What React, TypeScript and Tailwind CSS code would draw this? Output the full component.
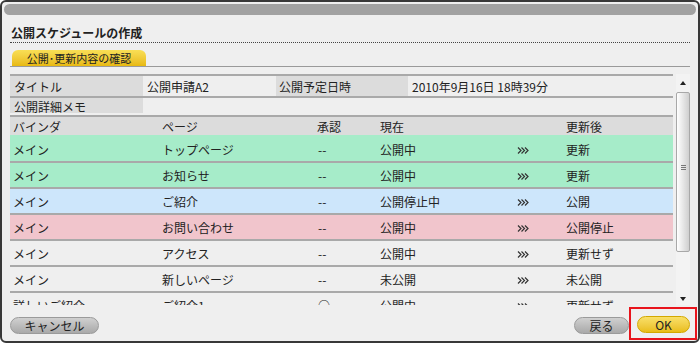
import React from 'react'

type Row = {
  binder: string
  page: string
  approve: string
  now: string
  after: string
  tone: string
}

const rows: Row[] = [
  { binder: 'メイン', page: 'トップページ', approve: '--', now: '公開中', after: '更新', tone: 'bg-[#a6ecc9] border-t-transparent' },
  { binder: 'メイン', page: 'お知らせ', approve: '--', now: '公開中', after: '更新', tone: 'bg-[#a6ecc9] border-t-[#a9a9a9]' },
  { binder: 'メイン', page: 'ご紹介', approve: '--', now: '公開停止中', after: '公開', tone: 'bg-[#cde6fb] border-t-[#a9a9a9]' },
  { binder: 'メイン', page: 'お問い合わせ', approve: '--', now: '公開中', after: '公開停止', tone: 'bg-[#f1c5cc] border-t-[#a9a9a9]' },
  { binder: 'メイン', page: 'アクセス', approve: '--', now: '公開中', after: '更新せず', tone: 'bg-[#efefef] border-t-[#a9a9a9]' },
  { binder: 'メイン', page: '新しいページ', approve: '--', now: '未公開', after: '未公開', tone: 'bg-[#efefef] border-t-[#a9a9a9]' },
  { binder: '詳しいご紹介', page: 'ご紹介1', approve: '○', now: '公開中', after: '更新せず', tone: 'bg-[#efefef] border-t-[#a9a9a9]' },
]

// three small chevrons between 現在 and 更新後
function Chevrons() {
  return (
    <svg width="13" height="9" viewBox="0 0 13 9" className="block">
      <g fill="none" stroke="#333" strokeWidth="1.2">
        <polyline points="1,1.5 4,4.5 1,7.5" />
        <polyline points="4.5,1.5 7.5,4.5 4.5,7.5" />
        <polyline points="8,1.5 11,4.5 8,7.5" />
      </g>
    </svg>
  )
}

function ScrollBar() {
  return (
    <div className="w-[14px] h-full flex flex-col items-center bg-[#f3f3f3]">
      <div className="mt-[7px] w-0 h-0 border-l-[3px] border-r-[3px] border-b-[4px] border-l-transparent border-r-transparent border-b-[#222]" />
      <div className="mt-[7px] w-[14px] h-[160px] rounded-[2px] border border-[#a8a8a8] bg-gradient-to-r from-white to-[#cfcfcf] flex items-center justify-center">
        <div className="flex flex-col gap-[1px] -mt-[10px]">
          <div className="w-[5px] h-[1px] bg-[#777]" />
          <div className="w-[5px] h-[1px] bg-[#777]" />
          <div className="w-[5px] h-[1px] bg-[#777]" />
        </div>
      </div>
      <div className="flex-1" />
      <div className="mb-[4px] w-0 h-0 border-l-[3px] border-r-[3px] border-t-[4px] border-l-transparent border-r-transparent border-t-[#222]" />
    </div>
  )
}

export default function App() {
  return (
    <div className="w-[700px] h-[343px] bg-white font-['Noto_Sans_CJK_JP','Noto_Sans',sans-serif] text-[#222] text-[12px]">
      <div className="w-full h-full rounded-[6px] border-2 border-[#383838] bg-[#efefef] flex flex-col overflow-hidden">
        {/* top bar */}
        <div className="mt-[2px] mx-[2px] h-[11px] rounded-full bg-[#a2a2a2]" />

        <div className="px-[8px] flex flex-col">
          {/* title */}
          <div className="mt-[10px] h-[16px] leading-[16px] pl-[1px] font-bold text-[12px] border-b border-dotted border-[#444] box-content pb-[1px]">
            公開スケジュールの作成
          </div>

          {/* tab */}
          <div className="mt-[7px] flex border-b border-[#9a9a9a]">
            <div className="ml-[2px] w-[134px] h-[16px] rounded-t-[6px] bg-gradient-to-b from-[#f9df55] to-[#e8b90c] text-[11px] leading-[16px] text-center text-[#222]">
              公開･更新内容の確認
            </div>
          </div>

          {/* scroll area */}
          <div className="mt-[7px] h-[231px] flex gap-[3px]">
            <div className="w-[663px] h-full overflow-hidden">
              {/* info table */}
              <div className="border-t-2 border-[#a9a9a9]">
                <div className="flex h-[20px] leading-[21px]">
                  <div className="w-[133px] bg-[#dcdcdc] pl-[4px]">タイトル</div>
                  <div className="w-[133px] pl-[4px]">公開申請A2</div>
                  <div className="w-[132px] bg-[#dcdcdc] pl-[3px]">公開予定日時</div>
                  <div className="flex-1 pl-[4px]">2010年9月16日 18時39分</div>
                </div>
                <div className="flex h-[17px] leading-[17px] border-t-2 border-[#a9a9a9]">
                  <div className="w-[133px] h-[15px] bg-[#dcdcdc] pl-[4px]">公開詳細メモ</div>
                  <div className="flex-1" />
                </div>
              </div>

              {/* list */}
              <div className="mt-[2px] border-t-2 border-[#a9a9a9]">
                <div className="flex h-[18px] leading-[19px] bg-[#dcdcdc]">
                  <div className="w-[149px] pl-[3px]">バインダ</div>
                  <div className="w-[155px] pl-[3px]">ページ</div>
                  <div className="w-[63px] pl-[3px]">承認</div>
                  <div className="w-[137px] pl-[3px]">現在</div>
                  <div className="w-[49px]" />
                  <div className="flex-1 pl-[3px]">更新後</div>
                </div>
                {rows.map((r, i) => (
                  <div key={i} className={`flex items-center h-[26px] pt-[2px] border-t-2 ${r.tone}`}>
                    <div className="w-[149px] pl-[3px]">{r.binder}</div>
                    <div className="w-[155px] pl-[3px]">{r.page}</div>
                    <div className="w-[63px] pl-[4px]">{r.approve}</div>
                    <div className="w-[137px] pl-[3px]">{r.now}</div>
                    <div className="w-[49px] pl-[3px]">
                      <Chevrons />
                    </div>
                    <div className="flex-1 pl-[3px]">{r.after}</div>
                  </div>
                ))}
              </div>
            </div>
            <ScrollBar />
          </div>

          {/* buttons */}
          <div className="mt-[11px] flex items-center">
            <button className="w-[89px] h-[17px] rounded-full border border-[#9a9a9a] bg-gradient-to-b from-[#d0d0d0] to-[#a9a9a9] text-[12px] leading-[15px] text-[#222]">
              キャンセル
            </button>
            <div className="flex-1" />
            <button className="w-[55px] h-[17px] rounded-full border border-[#9a9a9a] bg-gradient-to-b from-[#d0d0d0] to-[#a9a9a9] text-[12px] leading-[15px] text-[#222]">
              戻る
            </button>
            <div className="relative ml-[8px]">
              <button className="w-[53px] h-[17px] rounded-full border border-[#d3a800] bg-gradient-to-b from-[#f9e067] to-[#e9bd12] text-[12px] leading-[15px] text-[#222]">
                OK
              </button>
              <span className="absolute left-[-8px] top-[-9px] right-[-7px] bottom-[-6px] border-2 border-[#e8141c] pointer-events-none" />
            </div>
          </div>
        </div>
      </div>
    </div>
  )
}
